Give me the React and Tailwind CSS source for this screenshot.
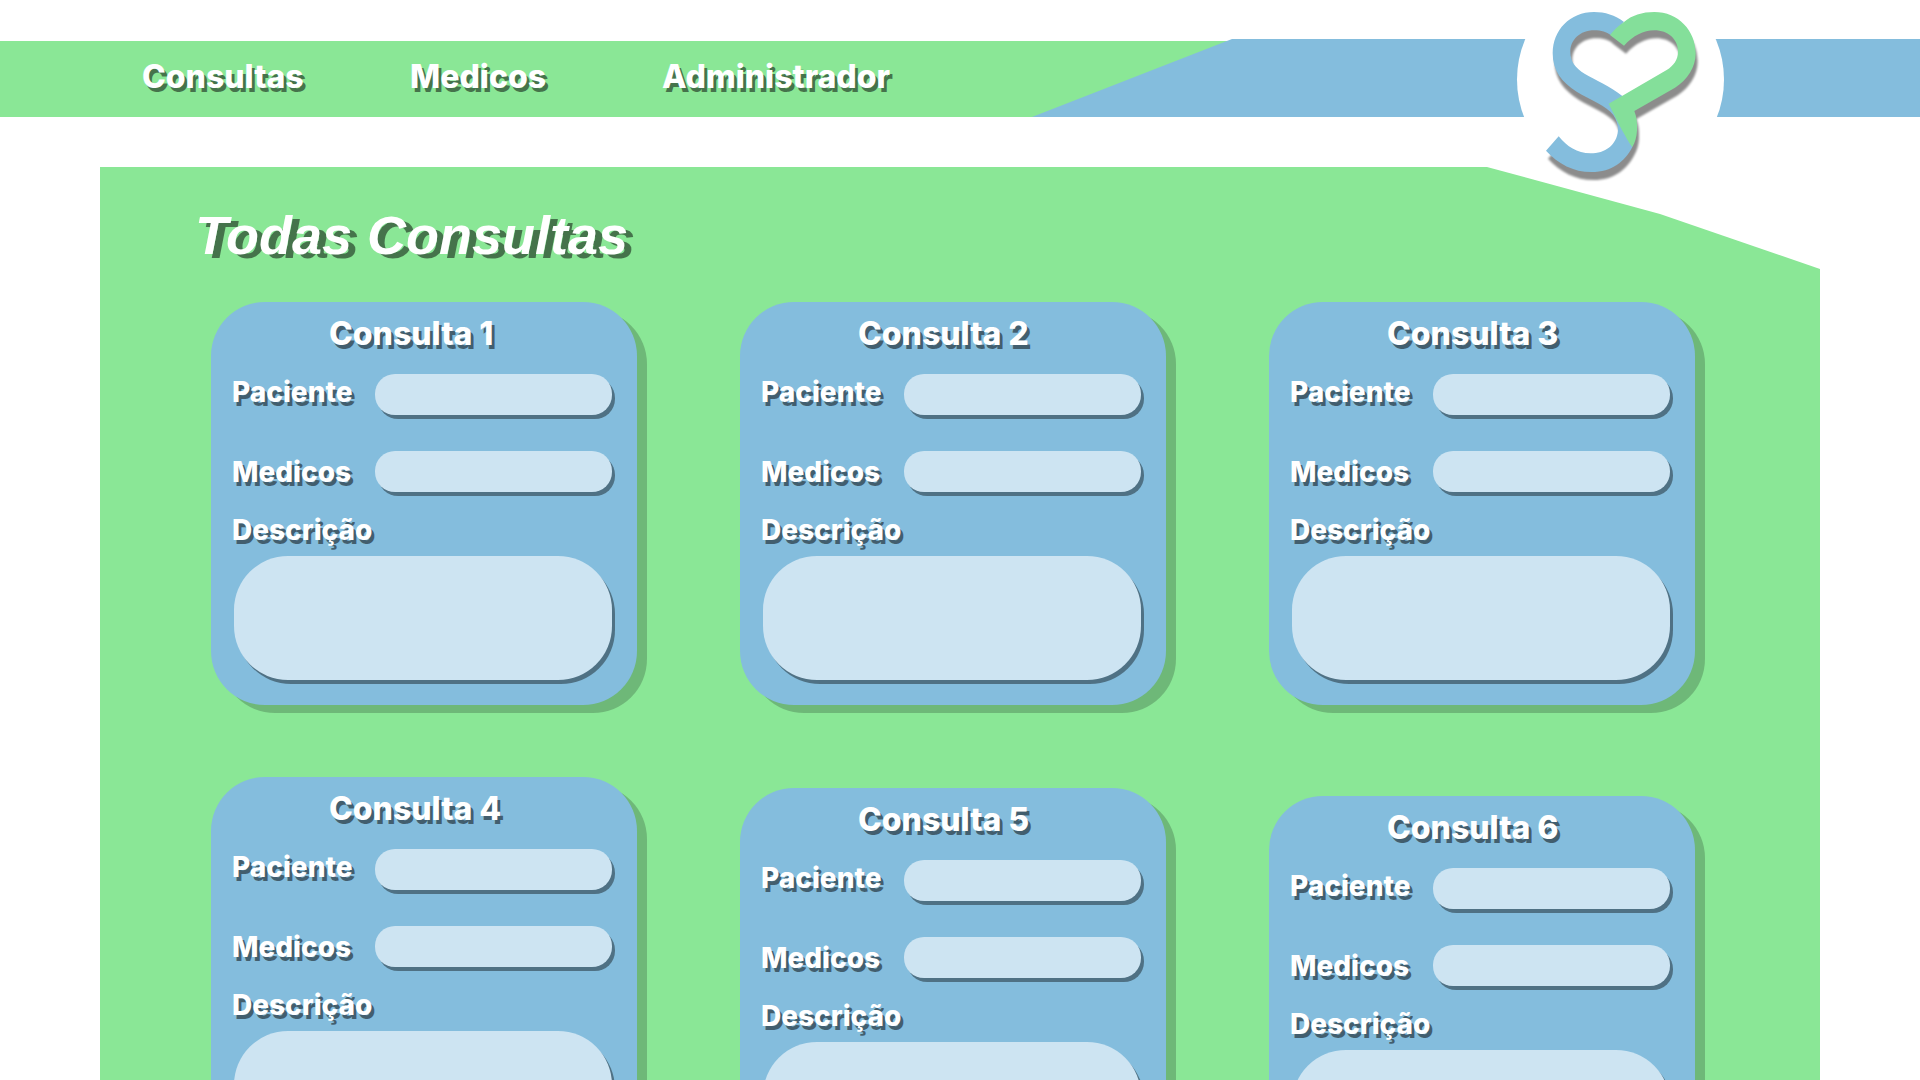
const columns = [
  { gap: 'gap-[72px]', items: [1, 4] },
  { gap: 'gap-[83px]', items: [2, 5] },
  { gap: 'gap-[91px]', items: [3, 6] },
];

const textShadow = '[text-shadow:3px_4px_0_rgba(0,0,0,0.5)]';
const field =
  'min-w-0 resize-none border-0 bg-[#cde4f2] text-xl text-slate-700 outline-none shadow-[3px_4px_0_rgba(0,0,0,0.4)]';

function Logo() {
  return (
    <a
      href="#inicio"
      aria-label="Início"
      className="absolute -top-6 right-[196px] z-10 block size-[207px] rounded-full bg-white"
    >
      <svg
        viewBox="111 -72 621 621"
        className="size-full overflow-visible [filter:drop-shadow(2px_8px_1px_rgba(0,0,0,0.45))]"
        aria-hidden="true"
      >
        <path
          fill="#84bddd"
          d="M432 66 C405 45 375 36 342 36 C270 36 218 90 218 160 C218 212 245 247 290 275 C330 299 380 318 400 345 C410 360 414 375 414 392 C410 435 375 460 332 460 C290 460 262 440 236 409 L198 452 C235 492 280 516 335 516 C395 516 435 485 457 441 L427 288 C390 258 345 240 315 222 C285 203 271 185 271 155 C271 120 300 91 342 91 C365 91 380 97 392 105 Z"
        />
        <path
          fill="#84df9a"
          d="M432 66 C455 46 487 36 523 36 C595 36 647 92 647 160 C647 202 622 240 585 263 L463 333 C470 350 472 370 471 392 C470 410 465 427 457 441 C450 433 442 420 415 370 L386 311 L560 210 C580 197 594 180 594 155 C594 118 565 91 523 91 C490 91 460 107 432 137 L390 105 C400 92 415 78 432 66 Z"
        />
      </svg>
    </a>
  );
}

function Header() {
  return (
    <header className="relative grid pt-[39px]">
      <nav
        className={`col-start-1 row-start-1 mt-0.5 flex h-[76px] items-center bg-[#8ae796] pb-1 pl-[142px] text-[32px] leading-10 font-extrabold text-white ${textShadow}`}
      >
        <a href="#consultas" className="w-[268px]">Consultas</a>
        <a href="#medicos" className="w-[252px]">Medicos</a>
        <a href="#administrador">Administrador</a>
      </nav>
      <div className="col-start-1 row-start-1 ml-[53.75%] bg-[#84bddd] [clip-path:polygon(200px_0,100%_0,100%_100%,0_100%)]" />
      <Logo />
    </header>
  );
}

function Card({ n }) {
  return (
    <article className="flex flex-col rounded-[54px] bg-[#84bddd] pt-3 pr-[25px] pb-[25px] pl-[21px] shadow-[10px_8px_0_rgba(0,0,0,0.2)]">
      <h2 className={`pl-[97px] text-[32px] leading-10 font-extrabold text-white ${textShadow}`}>Consulta {n}</h2>
      <div className="mt-5 flex items-center">
        <label htmlFor={`paciente-${n}`} className={`w-[143px] shrink-0 pb-[5px] text-[28px] leading-9 font-extrabold text-white ${textShadow}`}>
          Paciente
        </label>
        <input id={`paciente-${n}`} type="text" className={`h-[41px] flex-1 rounded-[20px] px-4 ${field}`} />
      </div>
      <div className="mt-9 flex items-center">
        <label htmlFor={`medicos-${n}`} className={`w-[143px] shrink-0 text-[28px] leading-9 font-extrabold text-white ${textShadow}`}>
          Medicos
        </label>
        <input id={`medicos-${n}`} type="text" className={`h-[41px] flex-1 rounded-[20px] px-4 ${field}`} />
      </div>
      <label htmlFor={`descricao-${n}`} className={`mt-5 text-[28px] leading-9 font-extrabold text-white ${textShadow}`}>
        Descrição
      </label>
      <textarea id={`descricao-${n}`} className={`mt-2 ml-0.5 h-[124px] rounded-[54px] px-8 py-5 ${field}`} />
    </article>
  );
}

export default function App() {
  return (
    <div className="min-h-screen overflow-x-hidden bg-white font-['Inter','Noto_Sans',sans-serif]">
      <Header />
      <main className="mx-[100px] mt-[50px] bg-[#8ae796] pt-8 pr-[125px] pb-24 pl-[111px] [clip-path:polygon(0_0,calc(100%-333px)_0,calc(100%-160px)_47px,100%_102px,100%_100%,0_100%)]">
        <h1 className="-ml-4 font-['Liberation_Sans','Inter',sans-serif] text-[54px] leading-[72px] font-bold text-white italic [text-shadow:7px_4px_0_rgba(0,0,0,0.5)]">
          Todas Consultas
        </h1>
        <div className="mt-[31px] grid grid-cols-3 gap-[103px]">
          {columns.map((column) => (
            <div key={column.gap} className={`flex min-w-0 flex-col ${column.gap}`}>
              {column.items.map((n) => (
                <Card key={n} n={n} />
              ))}
            </div>
          ))}
        </div>
      </main>
    </div>
  );
}
